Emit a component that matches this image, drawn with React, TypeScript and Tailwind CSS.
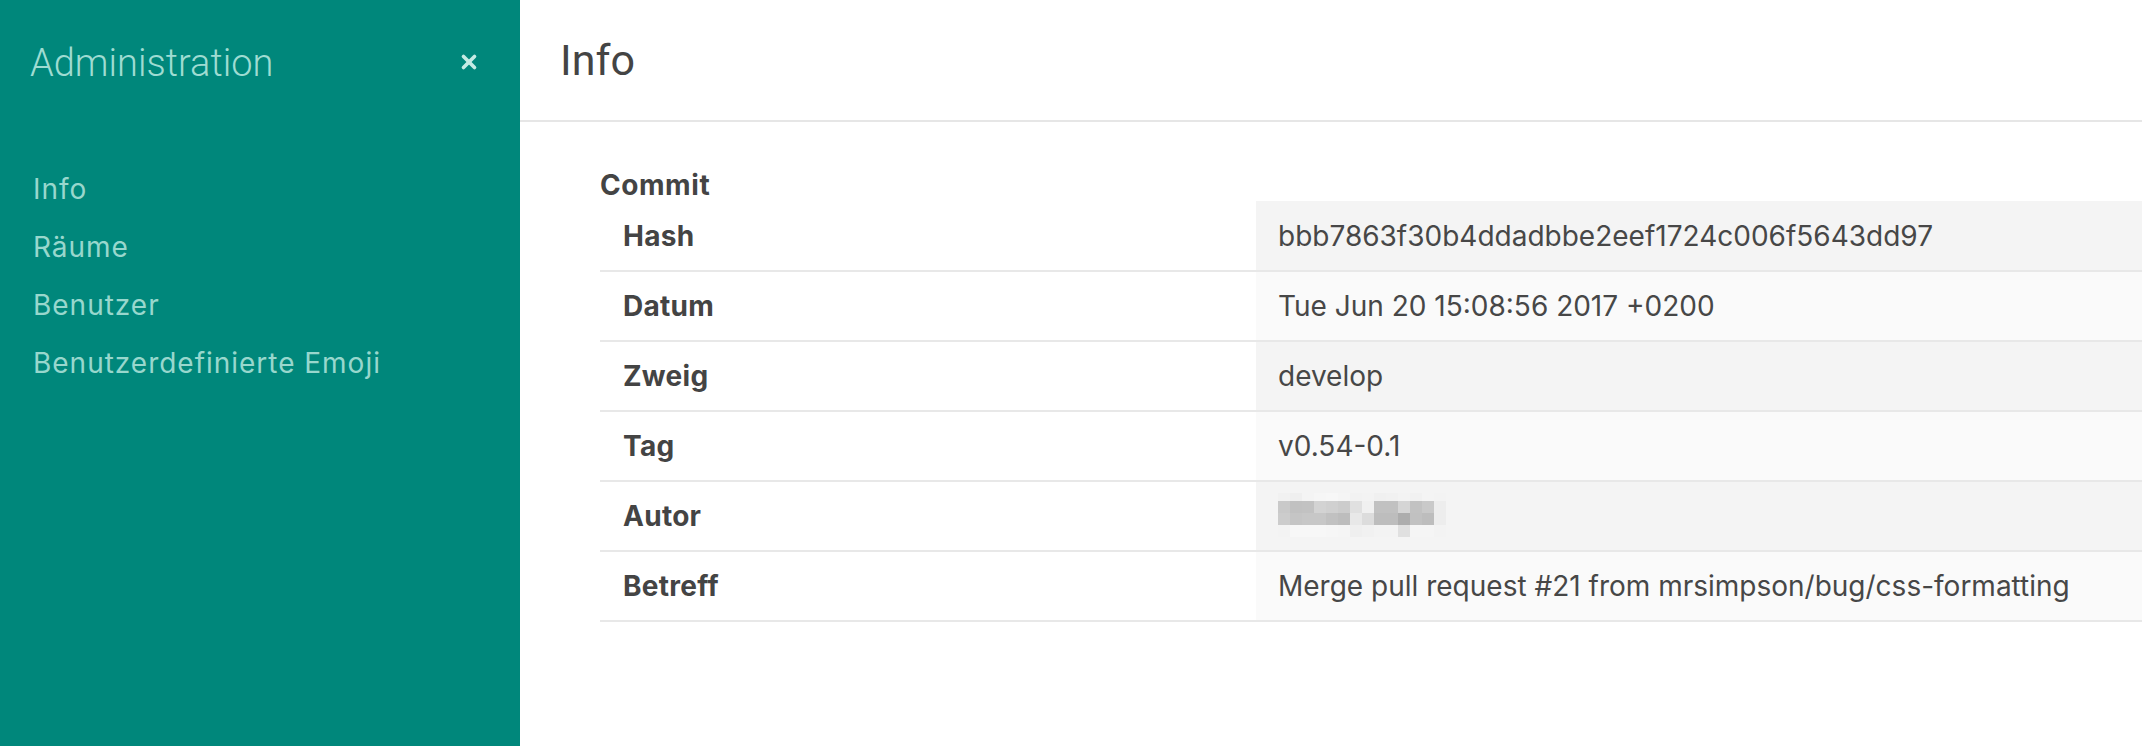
import { X } from 'lucide-react'

const menu = ['Info', 'Räume', 'Benutzer', 'Benutzerdefinierte Emoji']

const commit = [
  { label: 'Hash', value: 'bbb7863f30b4ddadbbe2eef1724c006f5643dd97' },
  { label: 'Datum', value: 'Tue Jun 20 15:08:56 2017 +0200' },
  { label: 'Zweig', value: 'develop' },
  { label: 'Tag', value: 'v0.54-0.1' },
  { label: 'Autor', value: null },
  { label: 'Betreff', value: 'Merge pull request #21 from mrsimpson/bug/css-formatting' },
]

// pixelated name, the way the screenshot hides it
const blur = [
  ['#f1f1f1', '#efefef', '#f4f4f4', '#f6f6f6', '#f7f7f7', '#f5f5f5', '#f2f2f2', '#f3f3f3', '#f0f0f0', '#f1f1f1', '#f3f3f3', '#f1f1f1', '#f4f4f4', '#f3f3f3'],
  ['#c9c9c9', '#c1c1c1', '#c2c2c2', '#d3d3d3', '#d0d0d0', '#cccccc', '#e0e0e0', '#f0f0f0', '#c1c1c1', '#c1c1c1', '#d5d5d5', '#c2c2c2', '#c9c9c9', '#ededed'],
  ['#cccccc', '#c5c5c5', '#c7c7c7', '#c7c7c7', '#c1c1c1', '#bdbdbd', '#e8e8e8', '#dcdcdc', '#bdbdbd', '#bdbdbd', '#adadad', '#c1c1c1', '#bdbdbd', '#ededed'],
  ['#f3f3f3', '#f7f7f7', '#f7f7f7', '#f7f7f7', '#f6f6f6', '#f5f5f5', '#efefef', '#f1f1f1', '#f3f3f3', '#f3f3f3', '#e0e0e0', '#f5f5f5', '#f5f5f5', '#f3f3f3'],
]

function Blurred() {
  return (
    <svg width="168" height="46" viewBox="0 0 168 46" className="block">
      {blur.map((row, r) =>
        row.map((c, i) => (
          <rect key={`${r}-${i}`} x={i * 12} y={r === 0 ? 0 : 8 + (r - 1) * 12} width="12" height={r === 0 ? 8 : 12} fill={c} />
        ))
      )}
    </svg>
  )
}

export default function App() {
  return (
    <div className="flex h-[746px] w-[2142px] overflow-hidden bg-white font-['Inter',sans-serif]">
      <aside className="w-[520px] shrink-0 bg-[#00877b]">
        <div className="flex h-[124px] items-center justify-between pl-[30px] pr-[40px]">
          <h1 className="mt-[2px] font-['Roboto',sans-serif] text-[38px] font-light text-[#9fdcd2]">Administration</h1>
          <X size={22} strokeWidth={4} className="text-[#c4ebe4]" />
        </div>
        <nav className="mt-[36px] flex flex-col pl-[33px]">
          {menu.map(m => (
            <a key={m} className="text-[28px] leading-[58px] tracking-[0.035em] text-[#98d7cd]">{m}</a>
          ))}
        </nav>
      </aside>

      <main className="min-w-0 flex-1">
        <header className="flex h-[122px] items-center border-b-2 border-[#e6e6e6] pl-[40px]">
          <h2 className="font-['Roboto',sans-serif] text-[43px] text-[#444]">Info</h2>
        </header>

        <section className="pl-[80px] pt-[47px]">
          <h3 className="text-[28px] font-bold leading-[32px] tracking-[0.02em] text-[#444]">Commit</h3>
          <table className="w-full border-collapse">
            <tbody>
              {commit.map((row, i) => (
                <tr key={row.label} className="border-b-2 border-[#e8e8e8]">
                  <td className="h-[70px] w-[656px] pl-[23px] text-[28px] font-bold tracking-[0.01em] text-[#444]">{row.label}</td>
                  <td className={`h-[70px] pl-[22px] text-[28px] text-[#474747] ${i % 2 === 0 ? 'bg-[#f4f4f4]' : 'bg-[#fafafa]'}`}>
                    {row.value ?? <Blurred />}
                  </td>
                </tr>
              ))}
            </tbody>
          </table>
        </section>
      </main>
    </div>
  )
}
